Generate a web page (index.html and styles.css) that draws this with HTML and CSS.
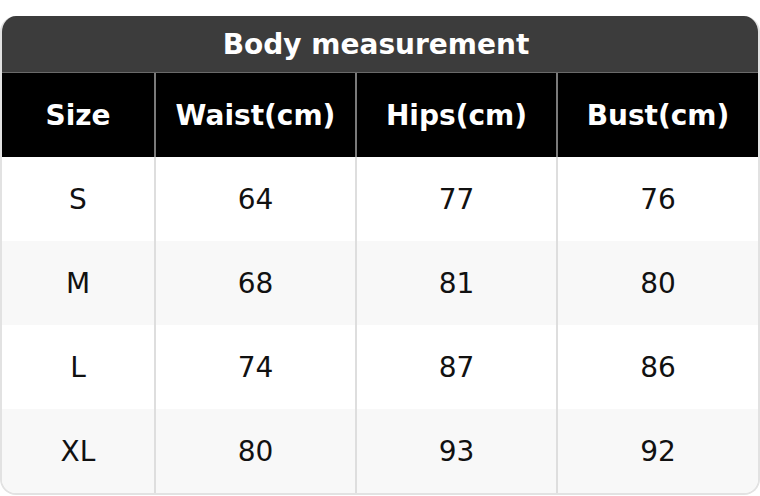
FILE: index.html
```html
<!DOCTYPE html>
<html>
<head>
<meta charset="utf-8">
<link rel="stylesheet" href="styles.css">
</head>
<body>
<div class="card">
  <div class="title">Body measurement</div>
  <table class="grid">
    <thead>
      <tr><th class="c1">Size</th><th>Waist(cm)</th><th>Hips(cm)</th><th>Bust(cm)</th></tr>
    </thead>
    <tbody>
      <tr><td>S</td><td>64</td><td>77</td><td>76</td></tr>
      <tr class="alt"><td>M</td><td>68</td><td>81</td><td>80</td></tr>
      <tr><td>L</td><td>74</td><td>87</td><td>86</td></tr>
      <tr class="alt"><td>XL</td><td>80</td><td>93</td><td>92</td></tr>
    </tbody>
  </table>
</div>
</body>
</html>
```
FILE: styles.css
```css
html, body {
  margin: 0;
  padding: 0;
  background: #ffffff;
}
body {
  padding-top: 16px;
  font-family: "DejaVu Sans", sans-serif;
}
.card {
  width: 760px;
  box-sizing: border-box;
  border: 2px solid #e2e2e2;
  border-top: none;
  border-radius: 16px;
  overflow: hidden;
}
.title {
  height: 56px;
  background: #3c3c3c;
  color: #ffffff;
  font-weight: bold;
  font-size: 28px;
  display: flex;
  align-items: center;
  justify-content: center;
  padding-right: 8px;
  border-bottom: 1px solid #6a6a6a;
}
.grid {
  width: 100%;
  border-collapse: collapse;
  table-layout: fixed;
}
.grid th, .grid td {
  height: 84px;
  padding: 0;
  text-align: center;
  vertical-align: middle;
  font-size: 28px;
  box-sizing: border-box;
}
.grid th {
  background: #000000;
  color: #ffffff;
  font-weight: bold;
  border-left: 2px solid #7a7a7a;
}
.grid td {
  color: #111111;
  border-left: 2px solid #dedede;
}
.grid th:first-child, .grid td:first-child {
  border-left: none;
}
.grid .c1 {
  width: 153px;
}
.grid tr.alt td {
  background: #f8f8f8;
}
```
